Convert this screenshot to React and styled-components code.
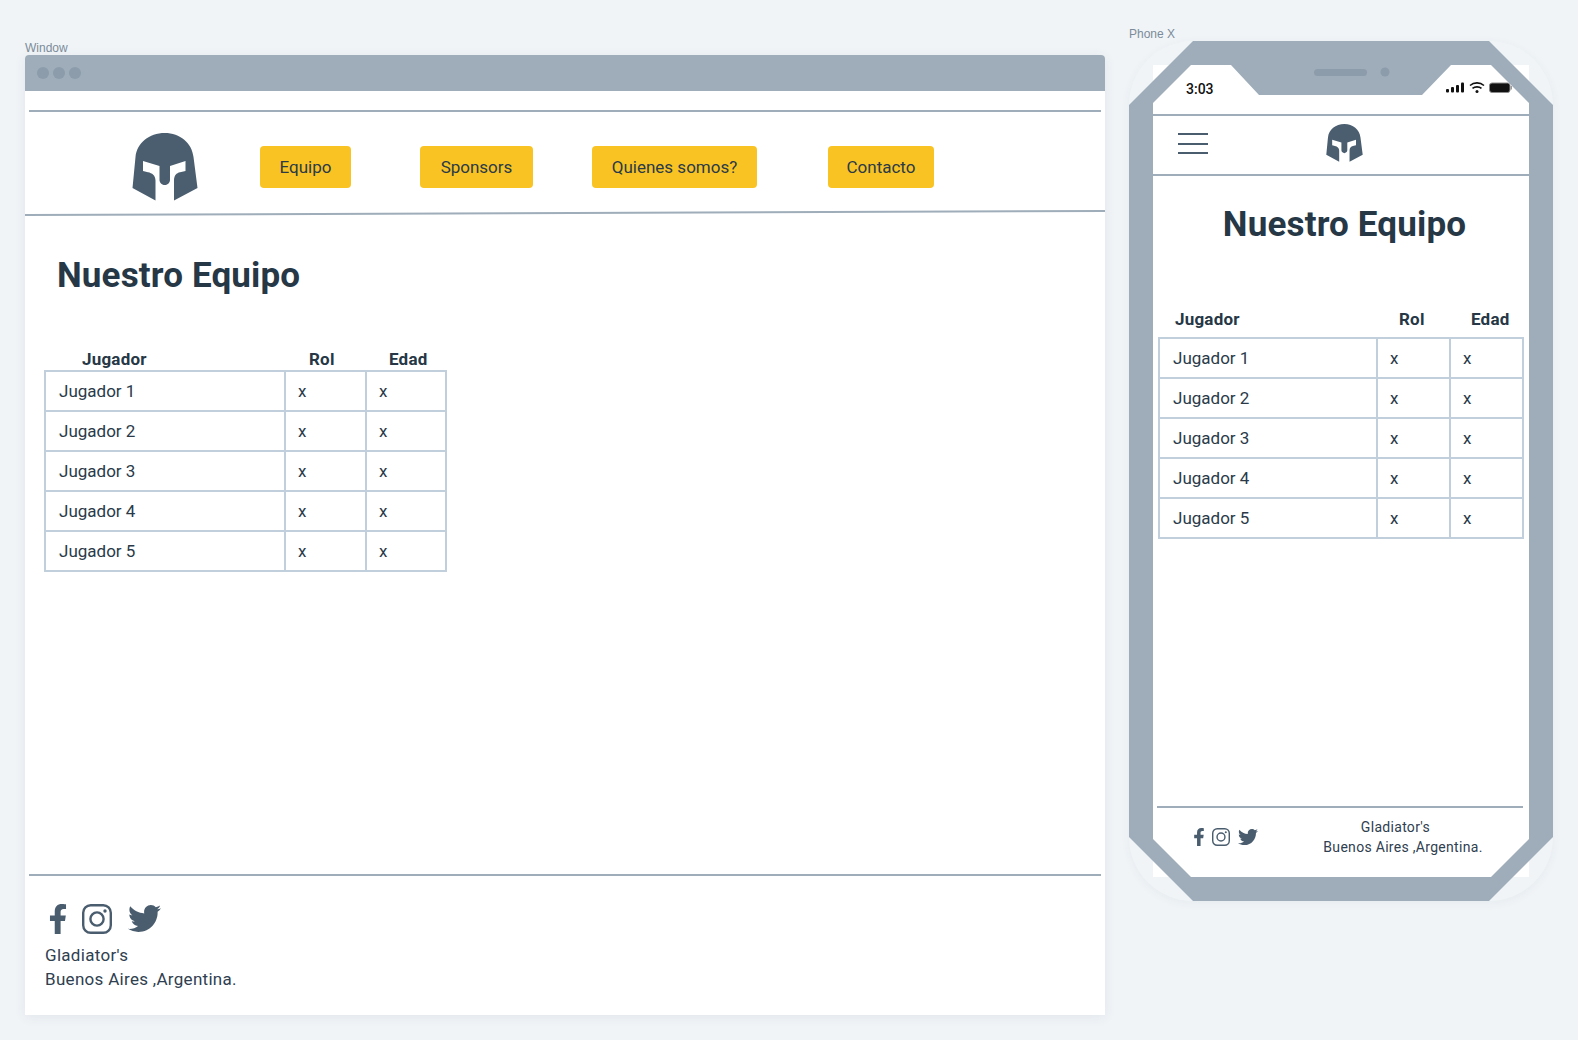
import React from 'react';
import styled, { createGlobalStyle } from 'styled-components';
import { FaFacebookF, FaTwitter } from 'react-icons/fa';

const GlobalStyle = createGlobalStyle`
  html, body {
    margin: 0;
    padding: 0;
    background: #f0f4f7;
    font-family: Roboto, "Liberation Sans", sans-serif;
  }
`;

const Page = styled.div`
  display: flex;
  align-items: flex-start;
  width: 1578px;
  height: 1040px;
  padding-left: 25px;
  box-sizing: border-box;
  overflow: hidden;
`;

const FrameLabel = styled.div`
  font-family: "Liberation Sans", sans-serif;
  font-size: 12px;
  line-height: 14px;
  color: #7c8b99;
`;

const WindowColumn = styled.div`
  width: 1080px;
  padding-top: 41px;
`;

const Window = styled.div`
  background: #fff;
  height: 960px;
  display: flex;
  flex-direction: column;
  border-radius: 4px 4px 0 0;
  box-shadow: 0 2px 12px rgba(60, 80, 100, 0.08);
`;

const TitleBar = styled.div`
  height: 36px;
  flex: none;
  background: #9eadb9;
  border-radius: 4px 4px 0 0;
  display: flex;
  align-items: center;
  gap: 4px;
  padding-left: 12px;
`;

const Dot = styled.span`
  width: 12px;
  height: 12px;
  border-radius: 50%;
  background: #8d9cab;
`;

const Rule = styled.div`
  height: 2px;
  flex: none;
  margin: 0 4px;
  background: #9eadb9;
`;

const TopRule = styled(Rule)`
  margin-top: 19px;
`;

const SlantedRule = styled.div`
  height: 2px;
  flex: none;
  background: #9eadb9;
  transform: rotate(-0.21deg);
`;

const Header = styled.header`
  height: 100px;
  box-sizing: border-box;
  display: flex;
  align-items: center;
  padding: 10px 0 0 107px;
`;

const NavButton = styled.a`
  margin-left: ${(p) => p.$gap}px;
  width: ${(p) => p.$width}px;
  height: 42px;
  display: flex;
  align-items: center;
  justify-content: center;
  border-radius: 4px;
  background: #f9c323;
  color: #2a3a49;
  font-size: 17px;
`;

const Title = styled.h1`
  margin: 40px 0 0 32px;
  font-size: 35px;
  line-height: 44px;
  font-weight: 700;
  letter-spacing: 0.15px;
  color: #263746;
`;

const PhoneTitle = styled(Title)`
  margin: 27px 0 0;
  padding-left: 7px;
  text-align: center;
`;

const TableWrap = styled.div`
  margin: ${(p) => p.$top}px 0 0 ${(p) => p.$left}px;
  width: ${(p) => p.$width}px;
`;

const Table = styled.table`
  border-collapse: collapse;
  table-layout: fixed;
  width: 100%;
  color: #2a3a49;
  font-size: 17px;
`;

const HeadCell = styled.th`
  height: ${(p) => p.$height}px;
  padding: 0 0 0 ${(p) => p.$pad}px;
  text-align: left;
  font-weight: 700;
  font-size: 17px;
  letter-spacing: 0.2px;
  color: #263746;
`;

const Cell = styled.td`
  height: 38px;
  padding: 0 0 0 ${(p) => p.$pad}px;
  border: 2px solid #c1cfdc;
`;

const Footer = styled.footer`
  margin-top: auto;
`;

const DesktopFooterBody = styled.div`
  height: 139px;
  padding: 26px 0 0 20px;
  box-sizing: border-box;
  color: #2f4050;
`;

const Socials = styled.div`
  display: flex;
  align-items: center;
  color: #4a5d6e;
  gap: ${(p) => p.$gap}px;
  margin-left: ${(p) => p.$left || 0}px;
`;

const TwitterIcon = styled(FaTwitter)`
  margin-left: ${(p) => p.$left}px;
`;

const FooterText = styled.div`
  font-size: ${(p) => p.$size}px;
  line-height: ${(p) => p.$line}px;
  letter-spacing: 0.3px;
  margin-top: ${(p) => p.$top || 0}px;
  text-align: ${(p) => p.$align || 'left'};
  color: #2f4050;
`;

const PhoneColumn = styled.div`
  margin-left: 24px;
  width: 424px;
  padding-top: 27px;
`;

const PhoneBody = styled.div`
  position: relative;
  height: 860px;
  border-radius: 64px;
  box-shadow: 0 2px 10px rgba(60, 80, 100, 0.05);
`;

const FrameArt = styled.svg`
  position: absolute;
  inset: 0;
  pointer-events: none;
`;

const Screen = styled.div`
  position: absolute;
  inset: 24px;
  display: flex;
  flex-direction: column;
  background: #fff;
`;

const StatusBar = styled.div`
  height: 49px;
  flex: none;
  position: relative;
`;

const Clock = styled.span`
  position: absolute;
  left: 33px;
  top: 16px;
  font-family: Roboto, sans-serif;
  font-size: 14px;
  font-weight: 500;
  color: #111;
`;

const StatusIcons = styled.svg`
  position: absolute;
  left: 293px;
  top: 17px;
`;

const PhoneRule = styled.div`
  height: 2px;
  flex: none;
  background: #9eadb9;
`;

const PhoneHeader = styled.div`
  height: 58px;
  box-sizing: border-box;
  position: relative;
  display: flex;
  align-items: center;
  justify-content: center;
  padding: 0 0 4px 7px;
`;

const Burger = styled.div`
  position: absolute;
  left: 25px;
  top: 17px;
  width: 30px;
  height: 21px;
  display: flex;
  flex-direction: column;
  justify-content: space-between;
`;

const BurgerBar = styled.span`
  height: 2px;
  background: #4a5d6e;
`;

const PhoneFooter = styled.div`
  margin-top: auto;
  height: 71px;
`;

const PhoneFooterRule = styled.div`
  height: 2px;
  margin: 0 6px 0 4px;
  background: #9eadb9;
`;

const PhoneFooterRow = styled.div`
  display: flex;
  padding: 9px 0 0 37px;
`;

const PhoneFooterText = styled.div`
  margin-left: 55px;
  width: 180px;
`;

const PhoneSocials = styled(Socials)`
  margin-top: 10px;
  align-self: flex-start;
`;

const Helmet = ({ size }) => (
  <svg width={size} height={size * 68 / 66} viewBox="0 0 66 68">
    <path
      fill="#4b5e6f"
      d="M0.5 55 L3.5 24 C5 10 17 0 32.8 0 C48 0 60 10 61.5 24 L65.5 55 L42 67.5 V47.5 C42 42.5 44.5 40 48 39.3 L53.5 38 V28 L38 33 V47 C38 50 35 52 32.8 52 C30.5 52 27.5 50 27.5 47 V33 L11 28 V38 L16 39.3 C20 40 23.5 42.5 23.5 47.5 V67.5 Z"
    />
  </svg>
);

const Instagram = ({ size }) => (
  <svg width={size} height={size} viewBox="0 0 30 30" fill="none" stroke="#4a5d6e" strokeWidth="2.4">
    <rect x="1.2" y="1.2" width="27.6" height="27.6" rx="7.5" />
    <circle cx="15" cy="15" r="6.6" />
    <circle cx="23" cy="7" r="1.7" fill="#4a5d6e" stroke="none" />
  </svg>
);

const players = ['Jugador 1', 'Jugador 2', 'Jugador 3', 'Jugador 4', 'Jugador 5'];

const PlayersTable = ({ cols, pads, headHeight }) => (
  <Table>
    <colgroup>
      {cols.map((c, i) => (
        <col key={i} style={{ width: c }} />
      ))}
    </colgroup>
    <thead>
      <tr>
        <HeadCell $height={headHeight} $pad={pads[0]}>Jugador</HeadCell>
        <HeadCell $height={headHeight} $pad={pads[1]}>Rol</HeadCell>
        <HeadCell $height={headHeight} $pad={pads[2]}>Edad</HeadCell>
      </tr>
    </thead>
    <tbody>
      {players.map((p) => (
        <tr key={p}>
          <Cell $pad={13}>{p}</Cell>
          <Cell $pad={12}>x</Cell>
          <Cell $pad={12}>x</Cell>
        </tr>
      ))}
    </tbody>
  </Table>
);

export default function App() {
  return (
    <>
      <GlobalStyle />
      <Page>
        <WindowColumn>
          <FrameLabel>Window</FrameLabel>
          <Window>
            <TitleBar>
              <Dot />
              <Dot />
              <Dot />
            </TitleBar>
            <TopRule />
            <Header>
              <Helmet size={66} />
              <NavButton $gap={62} $width={91}>Equipo</NavButton>
              <NavButton $gap={69} $width={113}>Sponsors</NavButton>
              <NavButton $gap={59} $width={165}>Quienes somos?</NavButton>
              <NavButton $gap={71} $width={106}>Contacto</NavButton>
            </Header>
            <SlantedRule />
            <Title>Nuestro Equipo</Title>
            <TableWrap $top={50} $left={19} $width={401}>
              <PlayersTable cols={[240, 81, 80]} pads={[37, 24, 23]} headHeight={22} />
            </TableWrap>
            <Footer>
              <Rule />
              <DesktopFooterBody>
                <Socials $gap={9} $left={-2}>
                  <FaFacebookF size={30} />
                  <Instagram size={30} />
                  <TwitterIcon size={33} $left={7} />
                </Socials>
                <FooterText $size={17} $line={24} $top={8}>
                  Gladiator's
                  <br />
                  Buenos Aires ,Argentina.
                </FooterText>
              </DesktopFooterBody>
            </Footer>
          </Window>
        </WindowColumn>
        <PhoneColumn>
          <FrameLabel>Phone X</FrameLabel>
          <PhoneBody>
            <Screen>
              <StatusBar>
                <Clock>3:03</Clock>
                <StatusIcons width="66" height="14" viewBox="0 0 66 14">
                  <g fill="#111">
                    <rect x="0" y="7" width="3" height="3.5" rx="1" />
                    <rect x="5" y="5" width="3" height="5.5" rx="1" />
                    <rect x="10" y="3" width="3" height="7.5" rx="1" />
                    <rect x="15" y="0.5" width="3" height="10" rx="1" />
                    <circle cx="31" cy="9.5" r="1.5" />
                  </g>
                  <g fill="none" stroke="#111" strokeWidth="1.6">
                    <path d="M24 3.5 C28 0 34 0 38 3.5" />
                    <path d="M26.5 6.4 C29 4.4 33 4.4 35.5 6.4" />
                  </g>
                  <rect x="43.5" y="1" width="20.5" height="9.5" rx="2.5" fill="#111" stroke="#8a8a8a" />
                  <rect x="64.5" y="4" width="1.5" height="3.5" fill="#999" />
                </StatusIcons>
              </StatusBar>
              <PhoneRule />
              <PhoneHeader>
                <Burger>
                  <BurgerBar />
                  <BurgerBar />
                  <BurgerBar />
                </Burger>
                <Helmet size={37} />
              </PhoneHeader>
              <PhoneRule />
              <PhoneTitle>Nuestro Equipo</PhoneTitle>
              <TableWrap $top={54} $left={5} $width={364}>
                <PlayersTable cols={[218, 73, 73]} pads={[16, 22, 21]} headHeight={36} />
              </TableWrap>
              <PhoneFooter>
                <PhoneFooterRule />
                <PhoneFooterRow>
                  <PhoneSocials $gap={4}>
                    <FaFacebookF size={18} />
                    <Instagram size={18} />
                    <TwitterIcon size={20} $left={4} />
                  </PhoneSocials>
                  <PhoneFooterText>
                    <FooterText $size={14} $line={20} $align="center">
                      Gladiator's{'\u00a0\u00a0\u00a0\u00a0'}
                      <br />
                      Buenos Aires ,Argentina.
                    </FooterText>
                  </PhoneFooterText>
                </PhoneFooterRow>
              </PhoneFooter>
            </Screen>
            {/* phone bezel drawn over the screen, notch included */}
            <FrameArt width="424" height="860" viewBox="0 0 424 860">
              <path
                fillRule="evenodd"
                fill="#9eadb9"
                d="M64 0 H360 L424 64 V796 L360 860 H64 L0 796 V64 Z
                   M24 62 V798 L62 836 H362 L400 798 V62 L362 24 H322 L293 54 H130 L102 24 H62 Z"
              />
              <rect x="185" y="28" width="53" height="7" rx="3.5" fill="#8d9cab" />
              <circle cx="256" cy="31" r="4.5" fill="#8d9cab" />
            </FrameArt>
          </PhoneBody>
        </PhoneColumn>
      </Page>
    </>
  );
}
